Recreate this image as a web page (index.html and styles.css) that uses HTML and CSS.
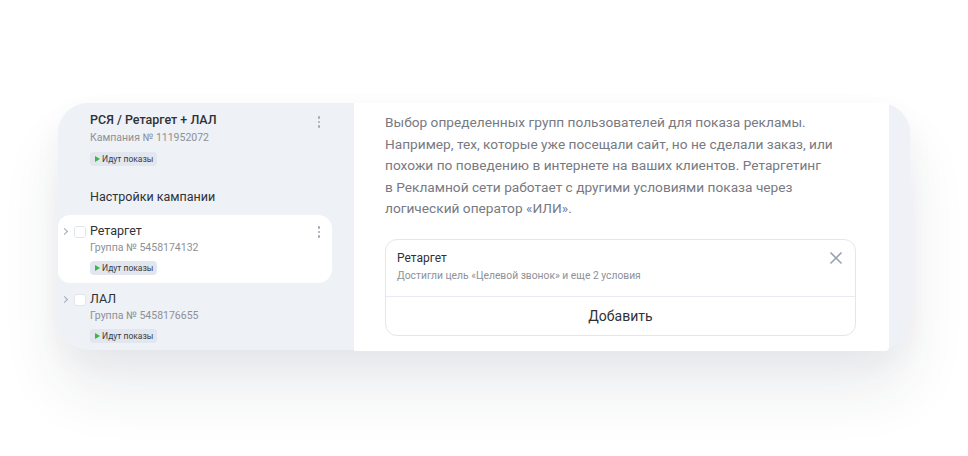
FILE: index.html
```html
<!DOCTYPE html>
<html lang="ru">

<head>
  <meta charset="UTF-8">
  <meta name="viewport" content="width=device-width, initial-scale=1.0">
  <title>Ретаргетинг</title>
  <link rel="stylesheet" href="styles.css">
</head>

<body>
  <div class="card">
    <div class="sidebar">
      <div class="campaign">
        <div class="title">РСЯ / Ретаргет + ЛАЛ</div>
        <div class="sub">Кампания № 111952072</div>
        <span class="badge"><i class="play"></i>Идут показы</span>
        <span class="kebab"><b></b><b></b><b></b></span>
      </div>

      <div class="section">Настройки кампании</div>

      <div class="group active">
        <span class="chevron"></span>
        <span class="check"></span>
        <div class="info">
          <div class="title">Ретаргет</div>
          <div class="sub">Группа № 5458174132</div>
          <span class="badge"><i class="play"></i>Идут показы</span>
        </div>
        <span class="kebab"><b></b><b></b><b></b></span>
      </div>

      <div class="group">
        <span class="chevron"></span>
        <span class="check"></span>
        <div class="info">
          <div class="title">ЛАЛ</div>
          <div class="sub">Группа № 5458176655</div>
          <span class="badge"><i class="play"></i>Идут показы</span>
        </div>
      </div>
    </div>

    <div class="main">
      <p class="desc">
        Выбор определенных групп пользователей для показа рекламы.<br>
        Например, тех, которые уже посещали сайт, но не сделали заказ, или<br>
        похожи по поведению в интернете на ваших клиентов. Ретаргетинг<br>
        в Рекламной сети работает с другими условиями показа через<br>
        логический оператор «ИЛИ».
      </p>

      <div class="condition">
        <div class="cond-head">
          <div class="cond-name">Ретаргет</div>
          <div class="cond-text">Достигли цель «Целевой звонок» и еще 2 условия</div>
          <svg class="close" width="14" height="14" viewBox="0 0 14 14">
            <path d="M1.5 1.5 L12.5 12.5 M12.5 1.5 L1.5 12.5" stroke="#9aa1b3" stroke-width="1.6" fill="none" />
          </svg>
        </div>
        <div class="cond-add">Добавить</div>
      </div>
    </div>

    <div class="edge"></div>
  </div>
</body>
</html>
```

FILE: styles.css
```css
html, body {
  margin: 0;
  padding: 0;
  background-color: #ffffff;
}

body {
  font-family: Roboto, "Noto Sans", sans-serif;
  color: #2f3136;
  padding: 103px 0 0 58px;
  min-height: 100vh;
  box-sizing: border-box;
  overflow: hidden;
}

.card {
  width: 852px;
  height: 247px;
  display: grid;
  grid-template-columns: 296px 535px 21px;
  background-color: #eef1f6;
  border-radius: 30px;
  box-shadow: 0 40px 60px rgba(30, 40, 70, 0.09), 0 10px 30px rgba(30, 40, 70, 0.04);
}

/* левая колонка */
.sidebar {
  display: flex;
  flex-direction: column;
  padding-top: 9px;
}

.campaign {
  position: relative;
  padding: 0 32px;
}

.title {
  font-size: 12.5px;
  line-height: 16px;
  font-weight: 500;
  color: #2f3136;
}

.sub {
  font-size: 10.5px;
  line-height: 16px;
  color: #8d9097;
  margin-top: 2px;
}

.badge {
  display: inline-flex;
  align-items: center;
  height: 14px;
  padding: 0 4px 0 5px;
  margin-top: 6px;
  background-color: #e1e6ef;
  border-radius: 4px;
  font-size: 8.5px;
  color: #3a3d44;
}

.play {
  width: 0;
  height: 0;
  border-left: 5px solid #3bb54a;
  border-top: 3.5px solid transparent;
  border-bottom: 3.5px solid transparent;
  margin-right: 2px;
}

.kebab {
  position: absolute;
  top: 4px;
  right: 34px;
  display: flex;
  flex-direction: column;
  gap: 2px;
}

.kebab b {
  width: 2.5px;
  height: 2.5px;
  border-radius: 50%;
  background-color: #a3a8b4;
}

.section {
  padding-left: 32px;
  margin-top: 22px;
  font-size: 12.5px;
  line-height: 18px;
  color: #2f3136;
}

.group {
  position: relative;
  display: flex;
  align-items: flex-start;
  width: 274px;
  box-sizing: border-box;
  padding: 8px 0 8px 3px;
}

.group.active {
  margin-top: 9px;
  background-color: #ffffff;
  border-radius: 12px 14px 14px 12px;
}

.group .kebab {
  top: 11px;
  right: 12px;
}

.group .title {
  font-weight: 400;
}

.group .sub {
  margin-top: 1px;
}

.group .badge {
  margin-top: 3px;
}

.chevron {
  width: 4px;
  height: 4px;
  margin: 6px 6px 0 1px;
  border-right: 1.3px solid #a3a8b4;
  border-bottom: 1.3px solid #a3a8b4;
  transform: rotate(-45deg);
}

.check {
  width: 10px;
  height: 10px;
  margin: 3px 4px 0 1px;
  border: 1px solid #e3e6ec;
  border-radius: 3px;
  background-color: #ffffff;
}

/* правая колонка */
.main {
  background-color: #ffffff;
  padding: 9px 0 0 31px;
  border-radius: 0 0 4px 0;
}

.desc {
  margin: 0;
  font-size: 13.7px;
  line-height: 21.5px;
  color: #777a82;
}

.condition {
  width: 471px;
  margin-top: 19px;
  border: 1px solid #e4e5ef;
  border-radius: 12px;
  box-sizing: border-box;
}

.cond-head {
  position: relative;
  height: 57px;
  padding: 10px 0 0 11px;
  box-sizing: border-box;
  border-bottom: 1px solid #e9eaf2;
}

.cond-name {
  font-size: 12px;
  line-height: 16px;
  color: #2f3136;
}

.cond-text {
  margin-top: 3px;
  font-size: 10.3px;
  line-height: 14px;
  color: #8d9097;
}

.close {
  position: absolute;
  top: 11px;
  right: 12px;
}

.cond-add {
  height: 38px;
  display: flex;
  align-items: center;
  justify-content: center;
  font-size: 14px;
  color: #2f3136;
}

.edge {
  border-radius: 0 30px 30px 0;
}
```
